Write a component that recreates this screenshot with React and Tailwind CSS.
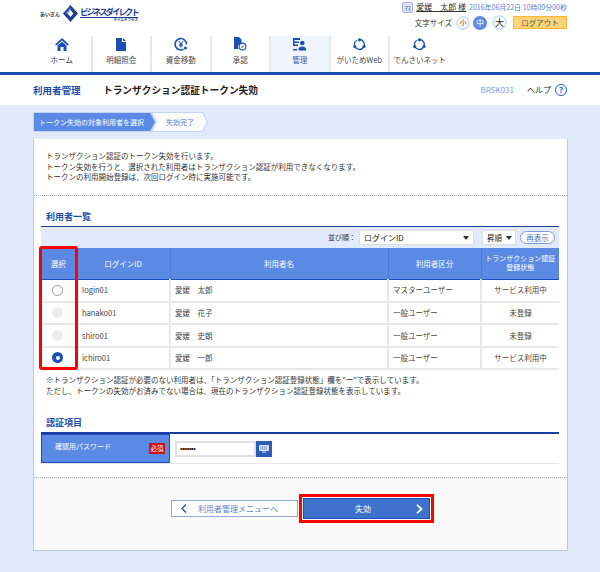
import React from "react";

const navItems = [
  { label: "ホーム", icon: "home" },
  { label: "明細照会", icon: "doc" },
  { label: "資金移動", icon: "yen" },
  { label: "承認", icon: "approve" },
  { label: "管理", icon: "admin", active: true },
  { label: "がいためWeb", icon: "ring" },
  { label: "でんさいネット", icon: "ring", last: true },
];

const users = [
  { id: "login01", name: "愛媛　太郎", type: "マスターユーザー", status: "サービス利用中", radio: "open" },
  { id: "hanako01", name: "愛媛　花子", type: "一般ユーザー", status: "未登録", radio: "off" },
  { id: "shiro01", name: "愛媛　史朗", type: "一般ユーザー", status: "未登録", radio: "off" },
  { id: "ichiro01", name: "愛媛　一郎", type: "一般ユーザー", status: "サービス利用中", radio: "on" },
];

const NavIcon = ({ type }) => {
  if (type === "home")
    return (
      <svg width="14" height="13" viewBox="0 0 14 13" fill="#1c4fb4">
        <path d="M7 0 14 6.5 12.5 7.5 7 2.6 1.500 7.500 0 6.500Z" />
        <path d="M2.500 7.600 7 3.800 11.500 7.600V13H8.500V9H5.500V13H2.500Z" />
      </svg>
    );
  if (type === "doc")
    return (
      <svg width="10" height="13" viewBox="0 0 10 13" fill="#1c4fb4">
        <path d="M0 0H6V4H10V13H0Z" />
        <path d="M7 0 10 3H7Z" />
      </svg>
    );
  if (type === "yen")
    return (
      <svg width="14" height="14" viewBox="0 0 14 14" fill="none" stroke="#1c4fb4">
        <path d="M9.500 12.300A5.700 5.700 0 1 1 12.500 7.500" strokeWidth="1.600" />
        <path d="M4.800 3.800 7 7 9.200 3.800M7 7V10.500M5 7.300H9M5 8.900H9" strokeWidth="1" />
        <circle cx="11.500" cy="11" r="1.600" fill="#1c4fb4" stroke="none" />
      </svg>
    );
  if (type === "approve")
    return (
      <svg width="13" height="14" viewBox="0 0 13 14">
        <path d="M0 0H5L7.500 2.500V6A4 4 0 0 0 4.500 12H0Z" fill="#1c4fb4" />
        <circle cx="8.500" cy="9.500" r="3.400" fill="white" stroke="#1c4fb4" strokeWidth="1.100" />
        <path d="M6.900 9.500 8.100 10.700 10.200 8.400" fill="none" stroke="#1c4fb4" strokeWidth="1" />
      </svg>
    );
  if (type === "admin")
    return (
      <svg width="13" height="13" viewBox="0 0 13 13" fill="#1c4fb4">
        <path d="M0 0H7V2H1.500V3.500H6V5H1.500V6.500H5V8H0Z" />
        <circle cx="9.300" cy="5" r="2.300" />
        <path d="M5.500 11A3.800 3 0 0 1 13 11V12.500H5.500Z" />
        <path d="M0 11H4V12.500H0Z" />
      </svg>
    );
  return (
    <svg width="13" height="13" viewBox="0 0 13 13" fill="none">
      <path d="M6.500 1.500A5 5 0 1 1 2 9" stroke="#1c4fb4" strokeWidth="1.300" />
      <path d="M1.600 7.500A5 5 0 0 1 4 2.200" stroke="#1c4fb4" strokeWidth="1.300" />
      <circle cx="6.500" cy="1.800" r="1.600" fill="#1c4fb4" />
      <circle cx="1.800" cy="8.500" r="1.600" fill="#1c4fb4" />
      <circle cx="11" cy="8.500" r="1.600" fill="#1c4fb4" />
    </svg>
  );
};

const Radio = ({ state }) => {
  if (state === "on")
    return (
      <span className="flex h-[11px] w-[11px] items-center justify-center rounded-full bg-[#1c4fb4]">
        <span className="h-[4px] w-[4px] rounded-full bg-white" />
      </span>
    );
  if (state === "off") return <span className="block h-[11px] w-[11px] rounded-full bg-[#ececec]" />;
  return <span className="block h-[11px] w-[11px] rounded-full border border-[#999] bg-white" />;
};

const Arrow = () => (
  <span className="ml-auto border-[3px] border-transparent border-t-[4px] border-t-[#333] border-b-0" />
);

export default function App() {
  return (
    <div className="relative h-[572px] w-[600px] overflow-hidden bg-[#e0eafb] font-['Noto_Sans_CJK_JP','Noto_Sans',sans-serif] text-[7.5px] text-[#444]">
      <header className="h-[75px] border-b-[3px] border-[#1a50b4] bg-white">
        <div className="flex h-[36px] items-start justify-between pl-[40px] pr-[33px]">
          <div className="mt-[5px] flex items-center gap-[3px]">
            <span className="text-[5px] font-bold text-[#333]">あいぎん</span>
            <svg width="15" height="17" viewBox="0 0 15 17">
              <path d="M7.500 0 15 8.500 7.500 17 0 8.500Z" fill="#1c3f94" />
              <path d="M7.500 5 10.500 8.500 7.500 12 4.500 8.500Z" fill="white" />
              <path d="M7.500 2.500 2.500 8.500 4.500 8.500 7.500 5Z" fill="#7c9bdc" />
            </svg>
            <div className="-ml-[1px] flex w-[58px] flex-col leading-none">
              <span className="text-[8.500px] leading-[11px] font-bold tracking-[-2.100px] whitespace-nowrap text-[#1c3f94]">ビジネスダイレクト</span>
              <span className="border-t border-[#1c3f94] text-right text-[3.500px] leading-[4px] font-bold text-[#1c3f94]">キャムデプラス</span>
            </div>
          </div>
          <div className="flex flex-col items-end">
            <div className="mt-[1px] flex h-[12px] items-center">
              <span className="mr-[3px] flex h-[11px] w-[11px] items-center justify-center rounded-[2px] border border-[#a8b4e0] bg-[#dfe4f6] text-[6px] text-[#3a55b0]">ﾏｽ</span>
              <span className="text-[8px] text-[#333] underline">愛媛　太郎 様</span>
              <span className="ml-[3px] text-[7px] text-[#5d7ed0]">2016年06月22日 10時00分00秒</span>
            </div>
            <div className="mt-[2px] flex items-center">
              <span className="mr-[4px] text-[7.500px] text-[#333]">文字サイズ</span>
              <span className="flex h-[14px] w-[14px] items-center justify-center rounded-full border-2 border-[#d5e1f8] bg-white text-[7px]">小</span>
              <span className="ml-[3px] flex h-[14px] w-[14px] items-center justify-center rounded-full bg-[#5b8ae0] text-[8px] text-white">中</span>
              <span className="ml-[5px] flex h-[15px] w-[15px] items-center justify-center rounded-full border-2 border-[#d5e1f8] bg-white text-[9px] text-[#222]">大</span>
              <span className="ml-[6px] flex h-[13px] w-[54px] items-center justify-center border border-[#ffb733] bg-[#ffd479] text-[7.500px] text-[#555]">ログアウト</span>
            </div>
          </div>
        </div>
        <nav className="flex h-[36px] pl-[33px]">
          {navItems.map((item) => (
            <div
              key={item.label}
              className={`flex w-[59.500px] flex-col items-center ${item.last ? "" : "border-r-2 border-[#e8e8e8]"} ${item.active ? "bg-[#f0f5fd] text-[#2c5cb8]" : ""}`}
            >
              <div className="flex h-[15px] items-center pt-[1px]">
                <NavIcon type={item.icon} />
              </div>
              <span className="mt-[2px] whitespace-nowrap text-[7.500px] leading-[14px]">{item.label}</span>
            </div>
          ))}
        </nav>
      </header>

      <div className="flex h-[30px] items-center bg-white pl-[33px] pr-[33px]">
        <span className="w-[70px] text-[9.500px] font-bold text-[#1c4fa8]">利用者管理</span>
        <h1 className="text-[9.700px] font-bold text-[#222]">トランザクション認証トークン失効</h1>
        <span className="ml-auto text-[8px] text-[#7c9bdc]">BRSK031</span>
        <span className="ml-[13px] text-[8px] text-[#222]">ヘルプ</span>
        <span className="ml-[4px] flex h-[12px] w-[12px] items-center justify-center rounded-full border border-[#1c5fd0] text-[8px] font-bold text-[#1c5fd0]">?</span>
      </div>

      <div className="mt-[7px] ml-[33px] flex h-[20px]">
        <div className="relative z-10 w-[124px] bg-[#c4d5f5] [clip-path:polygon(0_0,119px_0,124px_50%,119px_100%,0_100%)]">
          <div className="flex h-[18px] w-[122px] translate-y-[1px] items-center bg-[#5b8ae5] pl-[6px] text-[7px] text-white [clip-path:polygon(1px_0,117px_0,122px_50%,117px_100%,1px_100%)]">
            トークン失効の対象利用者を選択
          </div>
        </div>
        <div className="-ml-[5px] w-[56px] bg-[#c4d5f5] [clip-path:polygon(0_0,51px_0,56px_50%,51px_100%,0_100%)]">
          <div className="flex h-[18px] w-[55px] translate-y-[1px] items-center bg-[#fafafa] pl-[14px] text-[7px] text-[#5d7ed0] [clip-path:polygon(0_0,50px_0,55px_50%,50px_100%,0_100%)]">
            失効完了
          </div>
        </div>
      </div>

      <main className="mt-[7px] ml-[33px] h-[412px] w-[535px] border-r border-b border-l border-[#b9c7e2] bg-white">
        <div className="h-[57px] border-b border-dotted border-[#aaa] pt-[12px] pl-[12px] leading-[10.500px] text-[#333]">
          <p>トランザクション認証のトークン失効を行います。</p>
          <p>トークン失効を行うと、選択された利用者はトランザクション認証が利用できなくなります。</p>
          <p>トークンの利用開始登録は、次回ログイン時に実施可能です。</p>
        </div>

        <div className="px-[7px]">
          <h2 className="mt-[14px] ml-[5px] text-[9px] leading-[14px] font-bold text-[#1c4fa8]">利用者一覧</h2>
          <div className="relative mt-[2px] w-[518px] border-t border-[#1a3fa0]">
            <div className="flex h-[21px] items-center justify-end bg-[#e0eafb] pr-[4px] text-[#333]">
              <span className="mr-[3px] text-[7px]">並び順：</span>
              <div className="flex h-[15px] w-[115px] items-center border border-[#ddd] bg-white pr-[4px] pl-[4px] text-[8px] text-[#222]">
                ログインID
                <Arrow />
              </div>
              <div className="ml-[8px] flex h-[15px] w-[34px] items-center border border-[#ddd] bg-white pr-[3px] pl-[4px] text-[#222]">
                昇順
                <Arrow />
              </div>
              <div className="ml-[4px] flex h-[13px] w-[35px] items-center justify-center rounded-full border border-[#7c9bdc] bg-white text-[#4a6fc4]">再表示</div>
            </div>
            <table className="w-[518px] table-fixed border-collapse">
              <colgroup>
                <col className="w-[35px]" />
                <col className="w-[94px]" />
                <col className="w-[218px]" />
                <col className="w-[93px]" />
                <col className="w-[78px]" />
              </colgroup>
              <thead>
                <tr className="h-[31px] border-b border-[#1c50c0] bg-[#5b8ae5] text-white">
                  <th className="border-r border-[#4a78d6] font-normal">選択</th>
                  <th className="border-r border-[#4a78d6] font-normal">ログインID</th>
                  <th className="border-r border-[#4a78d6] font-normal">利用者名</th>
                  <th className="border-r border-[#4a78d6] font-normal">利用者区分</th>
                  <th className="text-[7px] leading-[9.500px] font-normal">
                    トランザクション認証
                    <br />
                    登録状態
                  </th>
                </tr>
              </thead>
              <tbody>
                {users.map((user) => (
                  <tr key={user.id} className="h-[22.500px] border-b-2 border-[#e8e8e8]">
                    <td className="border-r-2 border-[#e8e8e8]">
                      <div className="flex justify-center pr-[1px]">
                        <Radio state={user.radio} />
                      </div>
                    </td>
                    <td className="border-r-2 border-[#e8e8e8] pl-[5px]">{user.id}</td>
                    <td className="border-r-2 border-[#e8e8e8] pl-[4px]">{user.name}</td>
                    <td className="border-r-2 border-[#e8e8e8] pl-[4px]">{user.type}</td>
                    <td className="text-center">{user.status}</td>
                  </tr>
                ))}
              </tbody>
            </table>
            <div className="pointer-events-none absolute top-[19px] -left-[2px] h-[124px] w-[39px] rounded-[3px] border-[3px] border-[#f00]" />
          </div>
          <div className="mt-[5px] ml-[5px] leading-[10.500px] text-[#333]">
            <p>※トランザクション認証が必要のない利用者は、「トランザクション認証登録状態」欄を"ー"で表示しています。</p>
            <p>ただし、トークンの失効がお済みでない場合は、現在のトランザクション認証登録状態を表示しています。</p>
          </div>

          <h2 className="mt-[20px] ml-[5px] text-[9px] leading-[14px] font-bold text-[#1c4fa8]">認証項目</h2>
          <div className="mt-[2px] flex h-[32px] w-[518px] border-t-2 border-b border-t-[#1a3fa0] border-b-[#e5e5e5]">
            <div className="flex w-[129px] items-center justify-between border border-[#1c50c0] bg-[#5b8ae5] pr-[4px] pl-[13px] text-white">
              <span className="-mt-[4px] text-[7px]">確認用パスワード</span>
              <span className="flex h-[11px] w-[16px] items-center justify-center bg-[#cc1111] text-[6.500px]">必須</span>
            </div>
            <div className="ml-[5px] flex items-center">
              <div className="flex h-[16px] w-[81px] items-center border-2 border-[#e0e0e0] bg-white pl-[3px] text-[7px] tracking-[-0.500px] text-[#111]">••••••••</div>
              <div className="flex h-[16px] w-[16px] items-center justify-center bg-[#2a5cb8]">
                <svg width="10" height="8" viewBox="0 0 10 8">
                  <rect width="10" height="6" rx="1" fill="#dce6f8" />
                  <path d="M1.500 2H8.500M1.500 4H8.500" stroke="#2a5cb8" strokeDasharray="1 .7" />
                  <path d="M3 7H7" stroke="#dce6f8" />
                </svg>
              </div>
            </div>
          </div>
        </div>

        <div className="mt-[13px] flex h-[72px] border-t border-dotted border-[#aaa] bg-[#fafafa] pt-[22px] pl-[137px]">
          <div className="relative mt-[0px] flex h-[17px] w-[127px] items-center border border-[#8eaae0] bg-white pl-[9px] text-[8px] text-[#5d7ed0]">
            <svg width="6" height="9" viewBox="0 0 6 9" fill="none" stroke="#1c4fb4" strokeWidth="1.300">
              <path d="M5 .5 1 4.500 5 8.500" />
            </svg>
            <span className="ml-[11px]">利用者管理メニューへ</span>
          </div>
          <div className="ml-[5px] -mt-[2px] flex h-[21px] w-[127px] items-center border border-[#1c50c0] bg-[#3f72cc] pr-[6px] text-[8px] text-white outline-3 outline-offset-1 outline-[#f00]">
            <span className="flex-1 pl-[6px] text-center">失効</span>
            <svg width="7" height="10" viewBox="0 0 7 10" fill="none" stroke="white" strokeWidth="1.800">
              <path d="M1 .8 5.500 5 1 9.200" />
            </svg>
          </div>
        </div>
      </main>
    </div>
  );
}
